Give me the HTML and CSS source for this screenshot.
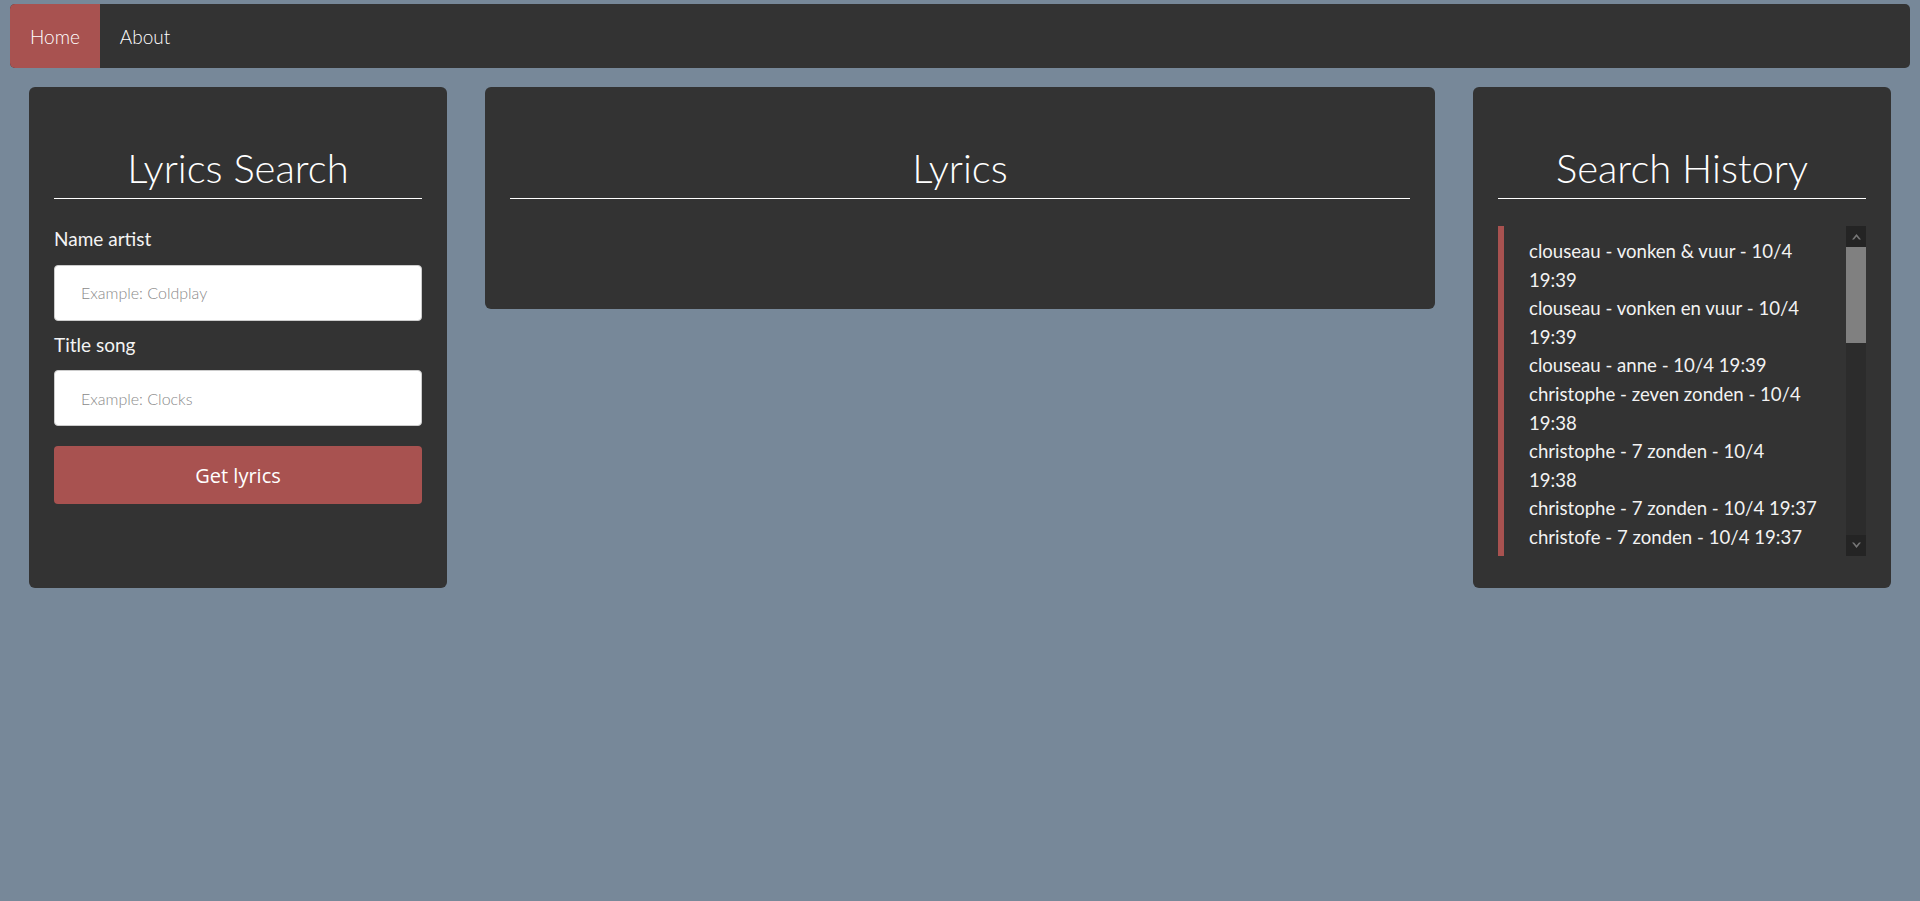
FILE: index.html
```html
<!DOCTYPE html>
<html lang="en">
<head>
<meta charset="utf-8">
<title>Lyrics</title>
<link rel="stylesheet" href="styles.css">
</head>
<body>
<nav class="topnav">
  <a class="nav-link active" href="#">Home</a>
  <a class="nav-link" href="#">About</a>
</nav>
<main class="layout">
  <section class="card">
    <h1 class="card-title">Lyrics Search</h1>
    <form class="search-form">
      <label class="field-label" for="artist">Name artist</label>
      <input class="field-input" id="artist" type="text" placeholder="Example: Coldplay">
      <label class="field-label" for="song">Title song</label>
      <input class="field-input" id="song" type="text" placeholder="Example: Clocks">
      <button class="submit-btn" type="button">Get lyrics</button>
    </form>
  </section>
  <section class="card">
    <h1 class="card-title">Lyrics</h1>
    <div class="lyrics-body"></div>
  </section>
  <section class="card card-history">
    <h1 class="card-title">Search History</h1>
    <div class="history">
      <ul class="history-list">
        <li>clouseau - vonken &amp; vuur - 10/4<br>19:39</li>
        <li>clouseau - vonken en vuur - 10/4<br>19:39</li>
        <li>clouseau - anne - 10/4 19:39</li>
        <li>christophe - zeven zonden - 10/4<br>19:38</li>
        <li>christophe - 7 zonden - 10/4<br>19:38</li>
        <li>christophe - 7 zonden - 10/4 19:37</li>
        <li>christofe - 7 zonden - 10/4 19:37</li>
      </ul>
      <div class="scrollbar" aria-hidden="true">
        <div class="scroll-btn">
          <svg width="9" height="7" viewBox="0 0 9 7"><path d="M0 6.5 L4.5 1 L9 6.5 L7 6.5 L4.5 3.6 L2 6.5 Z" fill="#777777"/></svg>
        </div>
        <div class="scroll-track">
          <div class="scroll-thumb"></div>
        </div>
        <div class="scroll-btn">
          <svg width="9" height="7" viewBox="0 0 9 7"><path d="M0 0.5 L4.5 6 L9 0.5 L7 0.5 L4.5 3.4 L2 0.5 Z" fill="#777777"/></svg>
        </div>
      </div>
    </div>
  </section>
</main>
</body>
</html>
```

FILE: styles.css
```css
html, body {
  margin: 0;
  padding: 0;
}

body {
  background: #778899;
  font-family: "Lato", "Noto Sans", sans-serif;
  color: #ffffff;
  min-height: 901px;
}

.topnav {
  display: flex;
  height: 64px;
  margin: 4px 10px 0;
  background: #333333;
  border-radius: 5px;
  overflow: hidden;
}

.nav-link {
  display: flex;
  align-items: center;
  padding: 0 20px;
  color: #ffffff;
  text-decoration: none;
  font-size: 19px;
  font-weight: 300;
}

.nav-link.active {
  background: #a85250;
}

.layout {
  display: grid;
  grid-template-columns: 418px 1fr 418px;
  column-gap: 38px;
  align-items: start;
  padding: 19px 29px 0;
}

.card {
  background: #333333;
  border-radius: 6px;
  padding: 25px 25px 25px;
}

.card-title {
  margin: 32px 0 26px;
  padding-bottom: 6px;
  border-bottom: 1px solid #ffffff;
  text-align: center;
  font-size: 40px;
  line-height: 48px;
  font-weight: 300;
  color: #ffffff;
}

.search-form {
  display: flex;
  flex-direction: column;
  padding-bottom: 59px;
}

.field-label {
  font-size: 19px;
  line-height: 28.5px;
  font-weight: 400;
  color: #f4f4f4;
  margin-bottom: 11px;
}

.field-input {
  box-sizing: border-box;
  height: 56px;
  margin: 0 0 10px;
  padding: 0 26px;
  border: 1px solid #cccccc;
  border-radius: 4px;
  background: #ffffff;
  font-family: "Lato", sans-serif;
  font-size: 16px;
  font-weight: 300;
  color: #333333;
}

.field-input::placeholder {
  color: #8a8a8a;
}

.submit-btn {
  margin-top: 10px;
  height: 58px;
  border: none;
  border-radius: 4px;
  background: #a85250;
  color: #ffffff;
  font-family: "Open Sans", "Noto Sans", sans-serif;
  font-size: 20px;
}

.lyrics-body {
  height: 59px;
}

.card-history {
  padding-bottom: 32px;
}

.card-history .card-title {
  margin-bottom: 27px;
}

.history {
  display: flex;
  height: 330px;
  border-left: 6px solid #a85250;
}

.history-list {
  flex: 1;
  overflow: hidden;
  list-style: none;
  margin: 0;
  padding: 11px 0 0 25px;
  font-size: 18.6px;
  line-height: 28.6px;
  font-weight: 400;
  color: #f2f2f2;
  white-space: nowrap;
}

.scrollbar {
  display: flex;
  flex-direction: column;
  width: 20px;
  background: #2c2c2c;
}

.scroll-btn {
  display: flex;
  align-items: center;
  justify-content: center;
  height: 21px;
  background: #242424;
}

.scroll-track {
  flex: 1;
}

.scroll-thumb {
  height: 96px;
  background: #808080;
}
```
